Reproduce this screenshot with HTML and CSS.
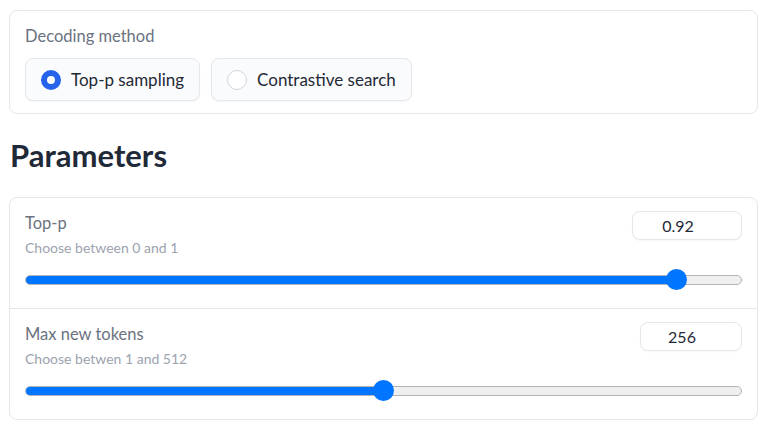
FILE: index.html
```html
<!DOCTYPE html>
<html lang="en">
<head>
<meta charset="utf-8">
<title>Parameters</title>
<link rel="stylesheet" href="styles.css">
</head>
<body>
<div class="page">
  <div class="card decoding">
    <div class="label">Decoding method</div>
    <div class="radios">
      <label class="radio">
        <span class="dot checked"></span>
        <span class="radio-text">Top-p sampling</span>
      </label>
      <label class="radio">
        <span class="dot"></span>
        <span class="radio-text">Contrastive search</span>
      </label>
    </div>
  </div>

  <h2 class="heading">Parameters</h2>

  <div class="card params">
    <div class="section">
      <div class="section-head">
        <div class="texts">
          <div class="label">Top-p</div>
          <div class="info">Choose between 0 and 1</div>
        </div>
        <div class="number wide">0.92</div>
      </div>
      <div class="slider">
        <div class="track">
          <div class="fill" style="width: calc(10px + 0.92 * (100% - 20px));"></div>
        </div>
        <div class="thumb" style="left: calc(0.92 * (100% - 20px));"></div>
      </div>
    </div>
    <div class="section">
      <div class="section-head">
        <div class="texts">
          <div class="label">Max new tokens</div>
          <div class="info">Choose betwen 1 and 512</div>
        </div>
        <div class="number">256</div>
      </div>
      <div class="slider">
        <div class="track">
          <div class="fill" style="width: calc(10px + 0.499 * (100% - 20px));"></div>
        </div>
        <div class="thumb" style="left: calc(0.499 * (100% - 20px));"></div>
      </div>
    </div>
  </div>
</div>
</body>
</html>
```

FILE: styles.css
```css
* { box-sizing: border-box; }

html, body {
  margin: 0;
  background: #ffffff;
}

body {
  font-family: "Source Sans Pro", Lato, "Noto Sans", sans-serif;
  color: #1f2937;
}

.page {
  padding: 10px 9px 0 9px;
}

.card {
  border: 1px solid #e5e7eb;
  border-radius: 8px;
  background: #ffffff;
}

.decoding {
  padding: 14px 15px 12px 15px;
}

.label {
  font-size: 16.5px;
  line-height: 22px;
  color: #6b7280;
}

.radios {
  display: flex;
  gap: 11px;
  margin-top: 11px;
}

.radio {
  display: flex;
  align-items: center;
  gap: 10px;
  height: 43px;
  padding: 0 15px;
  border: 1px solid #e5e7eb;
  border-radius: 8px;
  background: #fafbfc;
  box-shadow: 0 1px 2px rgba(0, 0, 0, 0.04);
  font-size: 17px;
  color: #1f2937;
}

.dot {
  width: 20px;
  height: 20px;
  border-radius: 50%;
  border: 1px solid #d1d5db;
  background: #ffffff;
  flex: none;
}

.dot.checked {
  border: 6.5px solid #2563eb;
  background: #ffffff;
}

.heading {
  margin: 23px 0 24px 1px;
  font-size: 31px;
  line-height: 36px;
  font-weight: 700;
  color: #1f2937;
}

.section {
  padding: 13px 15px 18px 15px;
}

.section + .section {
  border-top: 1px solid #e5e7eb;
}

.section-head {
  display: flex;
  justify-content: space-between;
  align-items: flex-start;
}

.texts .label {
  margin-top: 1px;
}

.info {
  margin-top: 4px;
  font-size: 14px;
  line-height: 20px;
  color: #9ca3af;
}

.number {
  width: 102px;
  height: 29px;
  padding-right: 18px;
  border: 1px solid #e5e7eb;
  border-radius: 8px;
  background: #ffffff;
  box-shadow: 0 1px 2px rgba(0, 0, 0, 0.04);
  display: flex;
  align-items: center;
  justify-content: center;
  font-size: 16px;
  color: #1f2937;
}

.number.wide {
  width: 110px;
}

.slider {
  position: relative;
  height: 21px;
  margin-top: 11px;
  display: flex;
  align-items: center;
}

.track {
  position: relative;
  width: 100%;
  height: 10px;
  border: 1px solid #b4b4b4;
  border-radius: 5px;
  background: #efefef;
  overflow: hidden;
}

.fill {
  position: absolute;
  left: -1px;
  top: -1px;
  bottom: -1px;
  background: #0075ff;
  border-radius: 5px 0 0 5px;
}

.thumb {
  position: absolute;
  top: 0;
  width: 21px;
  height: 21px;
  border-radius: 50%;
  background: #0075ff;
}
```
